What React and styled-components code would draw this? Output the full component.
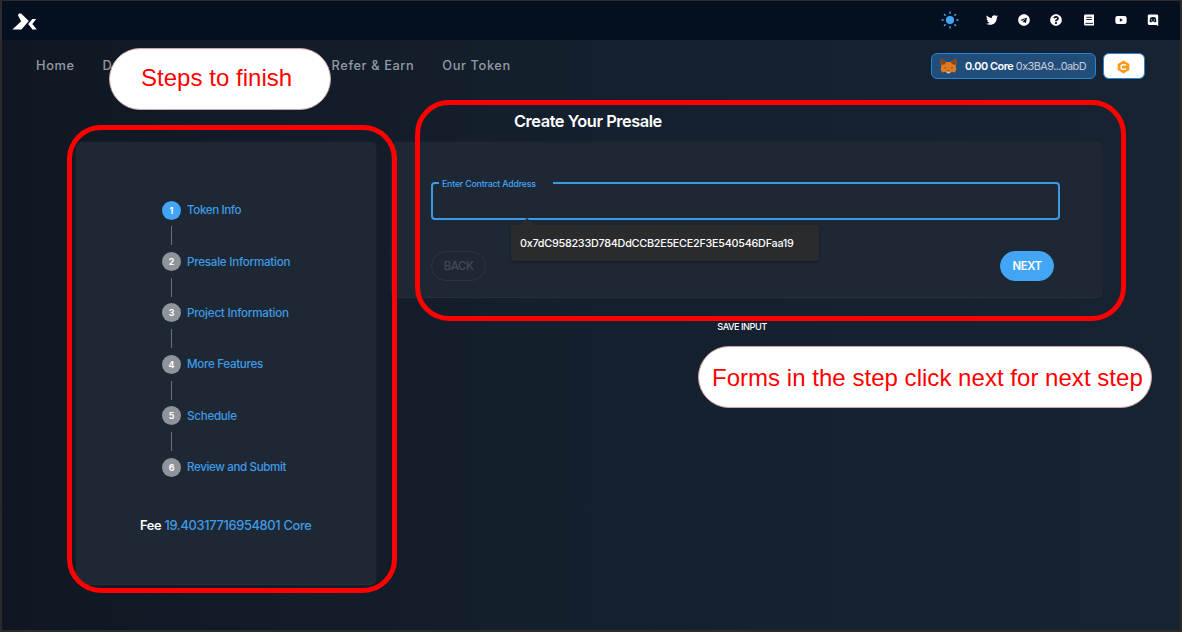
import React from 'react';
import styled, { createGlobalStyle, css } from 'styled-components';
import { FaTwitter, FaTelegram, FaQuestionCircle, FaYoutube } from 'react-icons/fa';

const BLUE = '#42a5f5';

const Global = createGlobalStyle`
  * { box-sizing: border-box; }
  body { margin: 0; background: #2b2b2b; }
`;

const Page = styled.div`
  position: relative;
  width: 1182px;
  height: 632px;
  padding: 1px 2px 2px 2px;
  overflow: hidden;
  background: #2b2b2b;
  font-family: Inter, 'Liberation Sans', sans-serif;
  color: #fff;
`;

const Screen = styled.div`
  height: 629px;
  background: linear-gradient(90deg, #101723 0%, #15202e 50%, #182332 100%);
`;

const TopBar = styled.header`
  height: 39px;
  display: flex;
  align-items: center;
  justify-content: space-between;
  padding: 0 21px 0 10px;
  background: #041020;
`;

const Logo = styled.svg`
  width: 25px;
  height: 17px;
  margin-top: 2px;
  display: block;
`;

const Socials = styled.div`
  display: flex;
  align-items: center;
  gap: 20.2px;
  margin-bottom: 2px;
  svg { display: block; width: 12px; height: 12px; }
  svg.sun { width: 18px; height: 18px; margin-right: 6.5px; }
`;

const NavRow = styled.div`
  height: 52px;
  display: flex;
  align-items: center;
  justify-content: space-between;
  padding: 0 35px 0 34px;
`;

const Nav = styled.nav`
  display: flex;
  gap: 28px;
`;

const NavLink = styled.a`
  width: ${(p) => (p.$wide ? '201px' : 'auto')};
  font-size: 12.8px;
  font-weight: 500;
  line-height: 18px;
  letter-spacing: 0.6px;
  color: #9399a3;
  white-space: nowrap;
`;

const Wallet = styled.div`
  display: flex;
  gap: 7px;
`;

const Account = styled.button`
  width: 165px;
  height: 26px;
  display: flex;
  align-items: center;
  padding: 0 0 0 8px;
  border: 1px solid #2185d8;
  border-radius: 6px;
  background: #214d7b;
  color: #c9ced6;
  font: 400 10.9px Inter, sans-serif;
  letter-spacing: -0.55px;
  white-space: nowrap;
  svg { width: 17px; height: 16px; margin-right: 8px; flex: none; }
  b { font-weight: 600; color: #fff; letter-spacing: -0.45px; }
`;

const Chain = styled.button`
  width: 42px;
  height: 26px;
  display: grid;
  place-items: center;
  padding: 0 1px 0 0;
  border: 1px solid #2185d8;
  border-radius: 6px;
  background: #fff;
  svg { width: 13px; height: 14px; margin-top: 1px; }
`;

const Content = styled.main`
  display: flex;
  align-items: flex-start;
  padding: 0 0 0 74px;
`;

const card = css`
  background: #1e2835;
  border-radius: 6px;
  box-shadow: 0 1px 1px #2d2f33, 0 0 3px rgba(45, 45, 48, 0.6);
`;

const StepsCard = styled.aside`
  ${card}
  width: 300px;
  height: 442px;
  margin-top: 50px;
  padding-top: 58.2px;
`;

const StepList = styled.ol`
  list-style: none;
  margin: 0;
  padding: 0 0 0 86px;
`;

const StepItem = styled.li`
  display: flex;
  align-items: center;
  gap: 6px;
  height: 20px;
  font-size: 11.6px;
  font-weight: 500;
  color: #3f9be6;
`;

const StepNumber = styled.span`
  width: 19px;
  height: 19px;
  border-radius: 50%;
  display: grid;
  place-items: center;
  font-size: 8.8px;
  font-weight: 700;
  color: #fff;
  background: ${(p) => (p.$active ? BLUE : '#8f939a')};
`;

const Connector = styled.li`
  width: 1px;
  height: 19px;
  margin: 6.2px 0 6.2px 9px;
  background: #6d7177;
`;

const Label = styled.span`
  letter-spacing: ${(p) => p.$track}px;
  white-space: nowrap;
`;

const Fee = styled.p`
  margin: 40.5px 0 0 64px;
  font-size: 12.8px;
  font-weight: 500;
  line-height: 16px;
  letter-spacing: -0.31px;
  color: #3f9be6;
  b { font-weight: 600; color: #fff; }
`;

const FormColumn = styled.section`
  width: 711px;
  margin-left: 15px;
  display: flex;
  flex-direction: column;
`;

const Title = styled.h1`
  margin: 18px 0 0 123px;
  height: 32px;
  font-size: 16.4px;
  line-height: 22px;
  font-weight: 600;
  letter-spacing: -0.46px;
`;

const FormCard = styled.div`
  ${card}
  height: 155px;
  padding: 35px 42px 0 40px;
`;

const Field = styled.fieldset`
  height: 43px;
  margin: 0;
  padding: 0 0 0 6px;
  border: 2px solid #3e99e4;
  border-radius: 4px;
  legend {
    width: 114px;
    padding: 1px 0 0 3px;
    font-size: 8.8px;
    line-height: 11px;
    letter-spacing: -0.2px;
    font-weight: 500;
    color: ${BLUE};
    white-space: nowrap;
  }
`;

const Actions = styled.div`
  display: flex;
  justify-content: space-between;
  margin-top: 31px;
  padding-right: 6px;
`;

const Pill = styled.button`
  width: ${(p) => (p.$primary ? 54 : 55)}px;
  height: 29.5px;
  padding: 0;
  border-radius: 15px;
  border: 1px solid ${(p) => (p.$primary ? BLUE : '#2b3542')};
  background: ${(p) => (p.$primary ? BLUE : 'transparent')};
  color: ${(p) => (p.$primary ? '#fff' : '#434b57')};
  font: ${(p) => (p.$primary ? 600 : 500)} 11.4px Inter, sans-serif;
  letter-spacing: -0.4px;
`;

const SaveInput = styled.button`
  align-self: center;
  margin-top: 23px;
  margin-right: 9px;
  padding: 0;
  border: 0;
  background: none;
  color: #fff;
  font: 500 9.2px/14px Inter, sans-serif;
  letter-spacing: -0.5px;
`;

const Tooltip = styled.div`
  position: absolute;
  left: 511px;
  top: 225px;
  width: 308px;
  height: 36px;
  padding-left: 9px;
  border-radius: 3px;
  background: #2a2b2d;
  box-shadow: 0 1px 3px rgba(0, 0, 0, 0.4);
  font-size: 10.8px;
  font-weight: 500;
  line-height: 37px;
  letter-spacing: -0.25px;
  white-space: nowrap;
  &::before {
    content: '';
    position: absolute;
    left: 9px;
    top: -7px;
    border: 7px solid transparent;
    border-top: 0;
    border-bottom-color: #2a2b2d;
  }
`;

const Outline = styled.div`
  position: absolute;
  left: ${(p) => p.$x}px;
  top: ${(p) => p.$y}px;
  width: ${(p) => p.$w}px;
  height: ${(p) => p.$h}px;
  border: 5px solid #f00;
  border-radius: 34px;
  pointer-events: none;
`;

const Callout = styled.div`
  position: absolute;
  left: ${(p) => p.$x}px;
  top: ${(p) => p.$y}px;
  width: ${(p) => p.$w}px;
  height: 62px;
  padding-left: ${(p) => p.$inset}px;
  border: 1px solid #c9a3a6;
  border-radius: 31px;
  background: #fff;
  color: #f00;
  font: 24px/${(p) => p.$line}px 'Liberation Sans', Arial, sans-serif;
  letter-spacing: 0.03px;
  white-space: nowrap;
`;

const steps = [
  ['Token Info', -0.38],
  ['Presale Information', -0.24],
  ['Project Information', -0.21],
  ['More Features', -0.31],
  ['Schedule', -0.26],
  ['Review and Submit', -0.37],
];

const Sun = () => (
  <svg className="sun" viewBox="0 0 18 18" fill={BLUE} stroke={BLUE} strokeWidth="1.4" strokeLinecap="round">
    <circle cx="9" cy="9" r="4.1" stroke="none" />
    <path d="M9 1v1.200M9 15.800V17M1 9h1.200M15.800 9H17M3.400 3.400l.8.8M13.800 13.800l.8.8M3.400 14.600l.8-.8M13.800 4.200l.8-.8" />
  </svg>
);

const Book = () => (
  <svg viewBox="0 0 12 12">
    <path fill="#fff" d="M2.500.5H11v11H2.500C1.500 11.500 1 10.900 1 10V2C1 1.100 1.600.5 2.500.5Z" />
    <path stroke="#041020" strokeWidth=".9" d="M3.300 3.300H8.800M3.300 5.500H8.800M2.500 9.400H10" />
  </svg>
);

const Discord = () => (
  <svg viewBox="0 0 12 12">
    <path fill="#fff" d="M2.200.5h7.600c.8 0 1.400.6 1.400 1.400V12L9.300 11H2.200C1.400 11 .8 10.400.8 9.600V1.900C.8 1.100 1.400.5 2.200.5Z" />
    <path fill="#041020" d="M3.500 3.400c1.600-.7 3.400-.7 5 0 .6 1.300.9 2.500.9 4-.6.6-1.200.8-1.900.8l-.4-.6H4.900l-.4.6c-.7 0-1.300-.2-1.900-.8 0-1.500.3-2.700.9-4Z" />
    <circle cx="4.700" cy="5.900" r=".55" fill="#fff" />
    <circle cx="7.300" cy="5.900" r=".55" fill="#fff" />
  </svg>
);

const Fox = () => (
  <svg viewBox="0 0 17 16">
    <path fill="#e07a22" d="M1 .5 6.200 4h4.600L16 .5l.5 5-.8 2.700.7 3.200-1.600 3.200-3.200-.8-1.500 1.500H6.900l-1.500-1.500-3.200.8-1.600-3.200.7-3.200L.5 5.500Z" />
    <path fill="#8a4615" d="M1 .5 6.200 4 4.900 6.300 1.300 7 .5 5.300ZM16 .5 10.800 4l1.300 2.300 3.600.7.8-1.700Z" />
    <path fill="#4a3526" d="m4.400 9.300 2 .7-1.700.6ZM12.600 9.300l-2 .7 1.700.6ZM7.300 12.400h2.400l.3 1.100H7Z" />
    <path fill="#d7c1b3" d="M6.700 13.500h3.600l-.6 1.700H7.300Z" />
  </svg>
);

const CoreMark = () => (
  <svg viewBox="0 0 13 14">
    <path fill="#ff9a16" d="M6.500.6 12.300 3.900v6.200L6.500 13.400.7 10.100V3.900Z" />
    <path fill="none" stroke="#fff" strokeWidth="1.500" d="M9 5.300 7.900 4.700H5.200L4.200 5.700v2.600l1 1h2.700L9 8.700" />
  </svg>
);

export default function App() {
  return (
    <Page>
      <Global />
      <Screen>
        <TopBar>
          <Logo viewBox="0 0 25 17" fill="#fff">
            <path d="M6.800.5 9.200.5 16.800 8 9.400 16.500H.4L9.200 8.300 6 2.400Z" />
            <path d="M20.400 6h3.800L20.300 11l4.500 5.500h-4.300L16.200 11Z" />
          </Logo>
          <Socials>
            <Sun />
            <FaTwitter />
            <FaTelegram />
            <FaQuestionCircle />
            <Book />
            <FaYoutube />
            <Discord />
          </Socials>
        </TopBar>
        <NavRow>
          <Nav>
            <NavLink>Home</NavLink>
            <NavLink $wide>Da</NavLink>
            <NavLink>Refer &amp; Earn</NavLink>
            <NavLink>Our Token</NavLink>
          </Nav>
          <Wallet>
            <Account>
              <Fox />
              <span><b>0.00 Core</b> 0x3BA9...0abD</span>
            </Account>
            <Chain><CoreMark /></Chain>
          </Wallet>
        </NavRow>
        <Content>
          <StepsCard>
            <StepList>
              {steps.map(([name, track], i) => (
                <React.Fragment key={name}>
                  {i > 0 && <Connector />}
                  <StepItem>
                    <StepNumber $active={i === 0}>{i + 1}</StepNumber>
                    <Label $track={track}>{name}</Label>
                  </StepItem>
                </React.Fragment>
              ))}
            </StepList>
            <Fee><b>Fee</b> 19.40317716954801 Core</Fee>
          </StepsCard>
          <FormColumn>
            <Title>Create Your Presale</Title>
            <FormCard>
              <Field><legend>Enter Contract Address</legend></Field>
              <Actions>
                <Pill>BACK</Pill>
                <Pill $primary>NEXT</Pill>
              </Actions>
            </FormCard>
            <SaveInput>SAVE INPUT</SaveInput>
          </FormColumn>
        </Content>
      </Screen>
      <Tooltip>0x7dC958233D784DdCCB2E5ECE2F3E540546DFaa19</Tooltip>
      <Outline $x={67} $y={125} $w={330} $h={468} />
      <Outline $x={415} $y={100} $w={711} $h={221} />
      <Callout $x={109} $y={48} $w={222} $inset={31} $line={58}>Steps to finish</Callout>
      <Callout $x={698} $y={345.5} $w={454} $inset={13} $line={62}>Forms in the step click next for next step</Callout>
    </Page>
  );
}
